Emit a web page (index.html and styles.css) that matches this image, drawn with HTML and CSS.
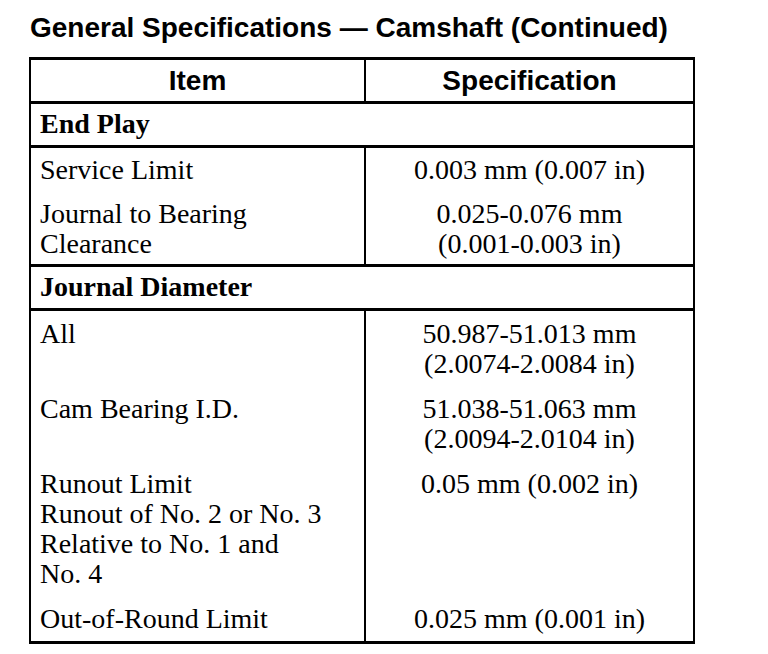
FILE: index.html
```html
<!DOCTYPE html>
<html>
<head>
<meta charset="utf-8">
<link rel="stylesheet" href="styles.css">
</head>
<body>
<div class="page">
  <h1 class="title">General Specifications — Camshaft (Continued)</h1>
  <table class="spec">
    <thead>
      <tr>
        <th class="col-item">Item</th>
        <th class="col-spec">Specification</th>
      </tr>
    </thead>
    <tbody>
      <tr class="section"><td colspan="2">End Play</td></tr>
      <tr class="data">
        <td class="item">Service Limit</td>
        <td class="value">0.003 mm (0.007 in)</td>
      </tr>
      <tr class="data group-end">
        <td class="item">Journal to Bearing<br>Clearance</td>
        <td class="value">0.025-0.076 mm<br>(0.001-0.003 in)</td>
      </tr>
      <tr class="section"><td colspan="2">Journal Diameter</td></tr>
      <tr class="data loose">
        <td class="item">All</td>
        <td class="value">50.987-51.013 mm<br>(2.0074-2.0084 in)</td>
      </tr>
      <tr class="data loose">
        <td class="item">Cam Bearing I.D.</td>
        <td class="value">51.038-51.063 mm<br>(2.0094-2.0104 in)</td>
      </tr>
      <tr class="data loose">
        <td class="item">Runout Limit<br>Runout of No. 2 or No. 3<br>Relative to No. 1 and<br>No. 4</td>
        <td class="value">0.05 mm (0.002 in)</td>
      </tr>
      <tr class="data loose last">
        <td class="item">Out-of-Round Limit</td>
        <td class="value">0.025 mm (0.001 in)</td>
      </tr>
    </tbody>
  </table>
</div>
</body>
</html>
```
FILE: styles.css
```css
html, body {
  margin: 0;
  padding: 0;
  background: #ffffff;
}
.page {
  padding: 12px 0 0 29px;
  color: #000000;
}
.title {
  margin: 0 0 14px 1px;
  font-family: "Liberation Sans", Arial, sans-serif;
  font-weight: bold;
  font-size: 28px;
  line-height: 31px;
}
.spec {
  border-collapse: collapse;
  width: 666px;
  table-layout: fixed;
  font-family: "Liberation Serif", "Times New Roman", serif;
  font-size: 28px;
  line-height: 30px;
}
.spec th {
  font-family: "Liberation Sans", Arial, sans-serif;
  font-weight: bold;
  font-size: 28px;
  text-align: center;
  height: 41px;
  padding: 0;
  border: 2px solid #000;
  border-top: 3px solid #000;
  border-bottom: 3px solid #000;
  vertical-align: middle;
}
.spec .col-item {
  width: 333px;
}
.section td {
  font-weight: bold;
  padding: 5px 9px 6px;
  border: 2px solid #000;
  border-top: 3px solid #000;
  border-bottom: 3px solid #000;
}
.data td {
  padding: 7px 9px 7px;
  border-left: 2px solid #000;
  border-right: 2px solid #000;
  vertical-align: top;
}
.data.group-end td {
  padding-bottom: 5px;
}
.data.loose td {
  padding-top: 8px;
}
.data .value {
  text-align: center;
}
.data.last td {
  padding-bottom: 7px;
  border-bottom: 3px solid #000;
}
```
